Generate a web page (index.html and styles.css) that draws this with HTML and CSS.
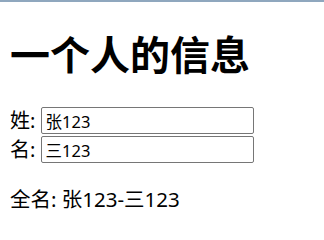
FILE: index.html
```html
<!DOCTYPE html>
<html lang="zh">
<head>
<meta charset="utf-8">
<title>一个人的信息</title>
<link rel="stylesheet" href="styles.css">
</head>
<body>
<div class="topline"></div>
<main class="page">
  <h1 class="title">一个人的信息</h1>
  <div class="form">
    <label class="row">姓: <input class="field" type="text" value="张123"></label>
    <label class="row">名: <input class="field" type="text" value="三123"></label>
  </div>
  <p class="full">全名: 张123-三123</p>
</main>
</body>
</html>
```
FILE: styles.css
```css
html, body {
  margin: 0;
  padding: 0;
  background: #fff;
}
body {
  font-family: "Noto Sans", "Noto Sans CJK SC", sans-serif;
  color: #000;
}
.topline {
  height: 2px;
  background: #8fa7be;
}
.page {
  padding: 0 10px;
}
.title {
  margin: 25px 0 0;
  font-size: 40px;
  line-height: 53px;
  font-weight: 700;
  font-family: "Noto Sans CJK SC", sans-serif;
}
.form {
  margin-top: 27px;
  display: flex;
  flex-direction: column;
  gap: 2px;
}
.row {
  display: flex;
  align-items: center;
  font-size: 20px;
  line-height: 26px;
  white-space: pre;
}
.field {
  box-sizing: border-box;
  width: 213px;
  height: 27px;
  margin: 0;
  padding: 0 4px;
  border: 1px solid #767676;
  border-radius: 2px;
  font-family: "Noto Sans", "Noto Sans CJK SC", sans-serif;
  font-size: 16.5px;
  color: #000;
  background: #fff;
}
.full {
  margin: 23px 0 0;
  font-size: 20.5px;
  line-height: 26px;
}
```
